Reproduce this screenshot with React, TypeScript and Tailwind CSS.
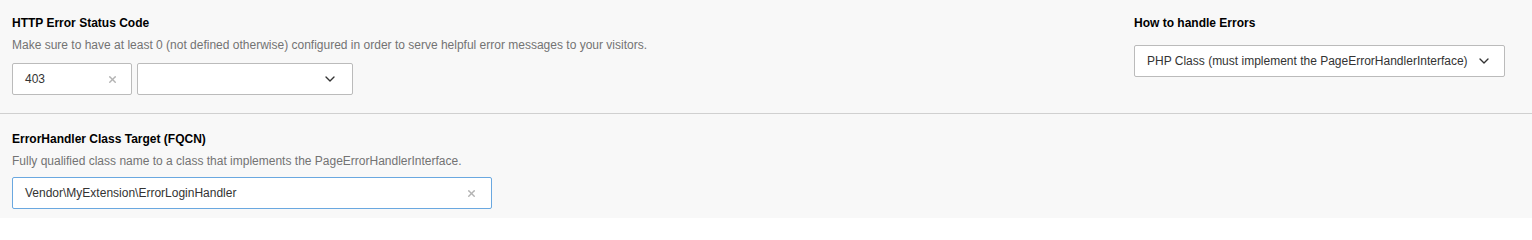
import { X, ChevronDown } from 'lucide-react';

const font = { fontFamily: '"Liberation Sans", Arial, sans-serif' };

function ClearIcon() {
  return <X className="w-[11px] h-[11px] text-[#b3b3b3]" strokeWidth={3} />;
}

export default function App() {
  return (
    <div className="w-[1532px] h-[218px] bg-[#f8f8f8] text-[12px] leading-[18px] text-[#333]" style={font}>
      <div className="flex justify-between px-3 pt-[14px] pb-[18px] border-b border-[#d0d0d0]">
        <div>
          <div className="font-bold text-[#000]">HTTP Error Status Code</div>
          <div className="mt-1 text-[#737373]">
            Make sure to have at least 0 (not defined otherwise) configured in order to serve helpful error messages to your visitors.
          </div>
          <div className="flex gap-[5px] mt-[9px]">
            <div className="w-[120px] h-[32px] flex items-center justify-between pl-3 pr-[13px] bg-white border border-[#bbb] rounded-[2px]">
              <span>403</span>
              <ClearIcon />
            </div>
            <div className="w-[216px] h-[32px] flex items-center justify-end pr-[14px] bg-white border border-[#bbb] rounded-[2px]">
              <ChevronDown className="w-4 h-4 text-[#333]" strokeWidth={2} />
            </div>
          </div>
        </div>
        <div className="mr-[15px] w-[371px]">
          <div className="font-bold text-[#000]">How to handle Errors</div>
          <div className="mt-[13px] h-[32px] flex items-center justify-between pl-3 pr-[12px] bg-white border border-[#bbb] rounded-[2px]">
            <span>PHP Class (must implement the PageErrorHandlerInterface)</span>
            <ChevronDown className="w-4 h-4 text-[#333]" strokeWidth={2} />
          </div>
        </div>
      </div>
      <div className="px-3 pt-[16px]">
        <div className="font-bold text-[#000]">ErrorHandler Class Target (FQCN)</div>
        <div className="mt-1 text-[#737373]">Fully qualified class name to a class that implements the PageErrorHandlerInterface.</div>
        <div className="mt-[7px] w-[480px] h-[32px] flex items-center justify-between pl-3 pr-[14px] bg-white border border-[#6aa8e0] rounded-[2px]">
          <span>Vendor\MyExtension\ErrorLoginHandler</span>
          <ClearIcon />
        </div>
      </div>
    </div>
  );
}
